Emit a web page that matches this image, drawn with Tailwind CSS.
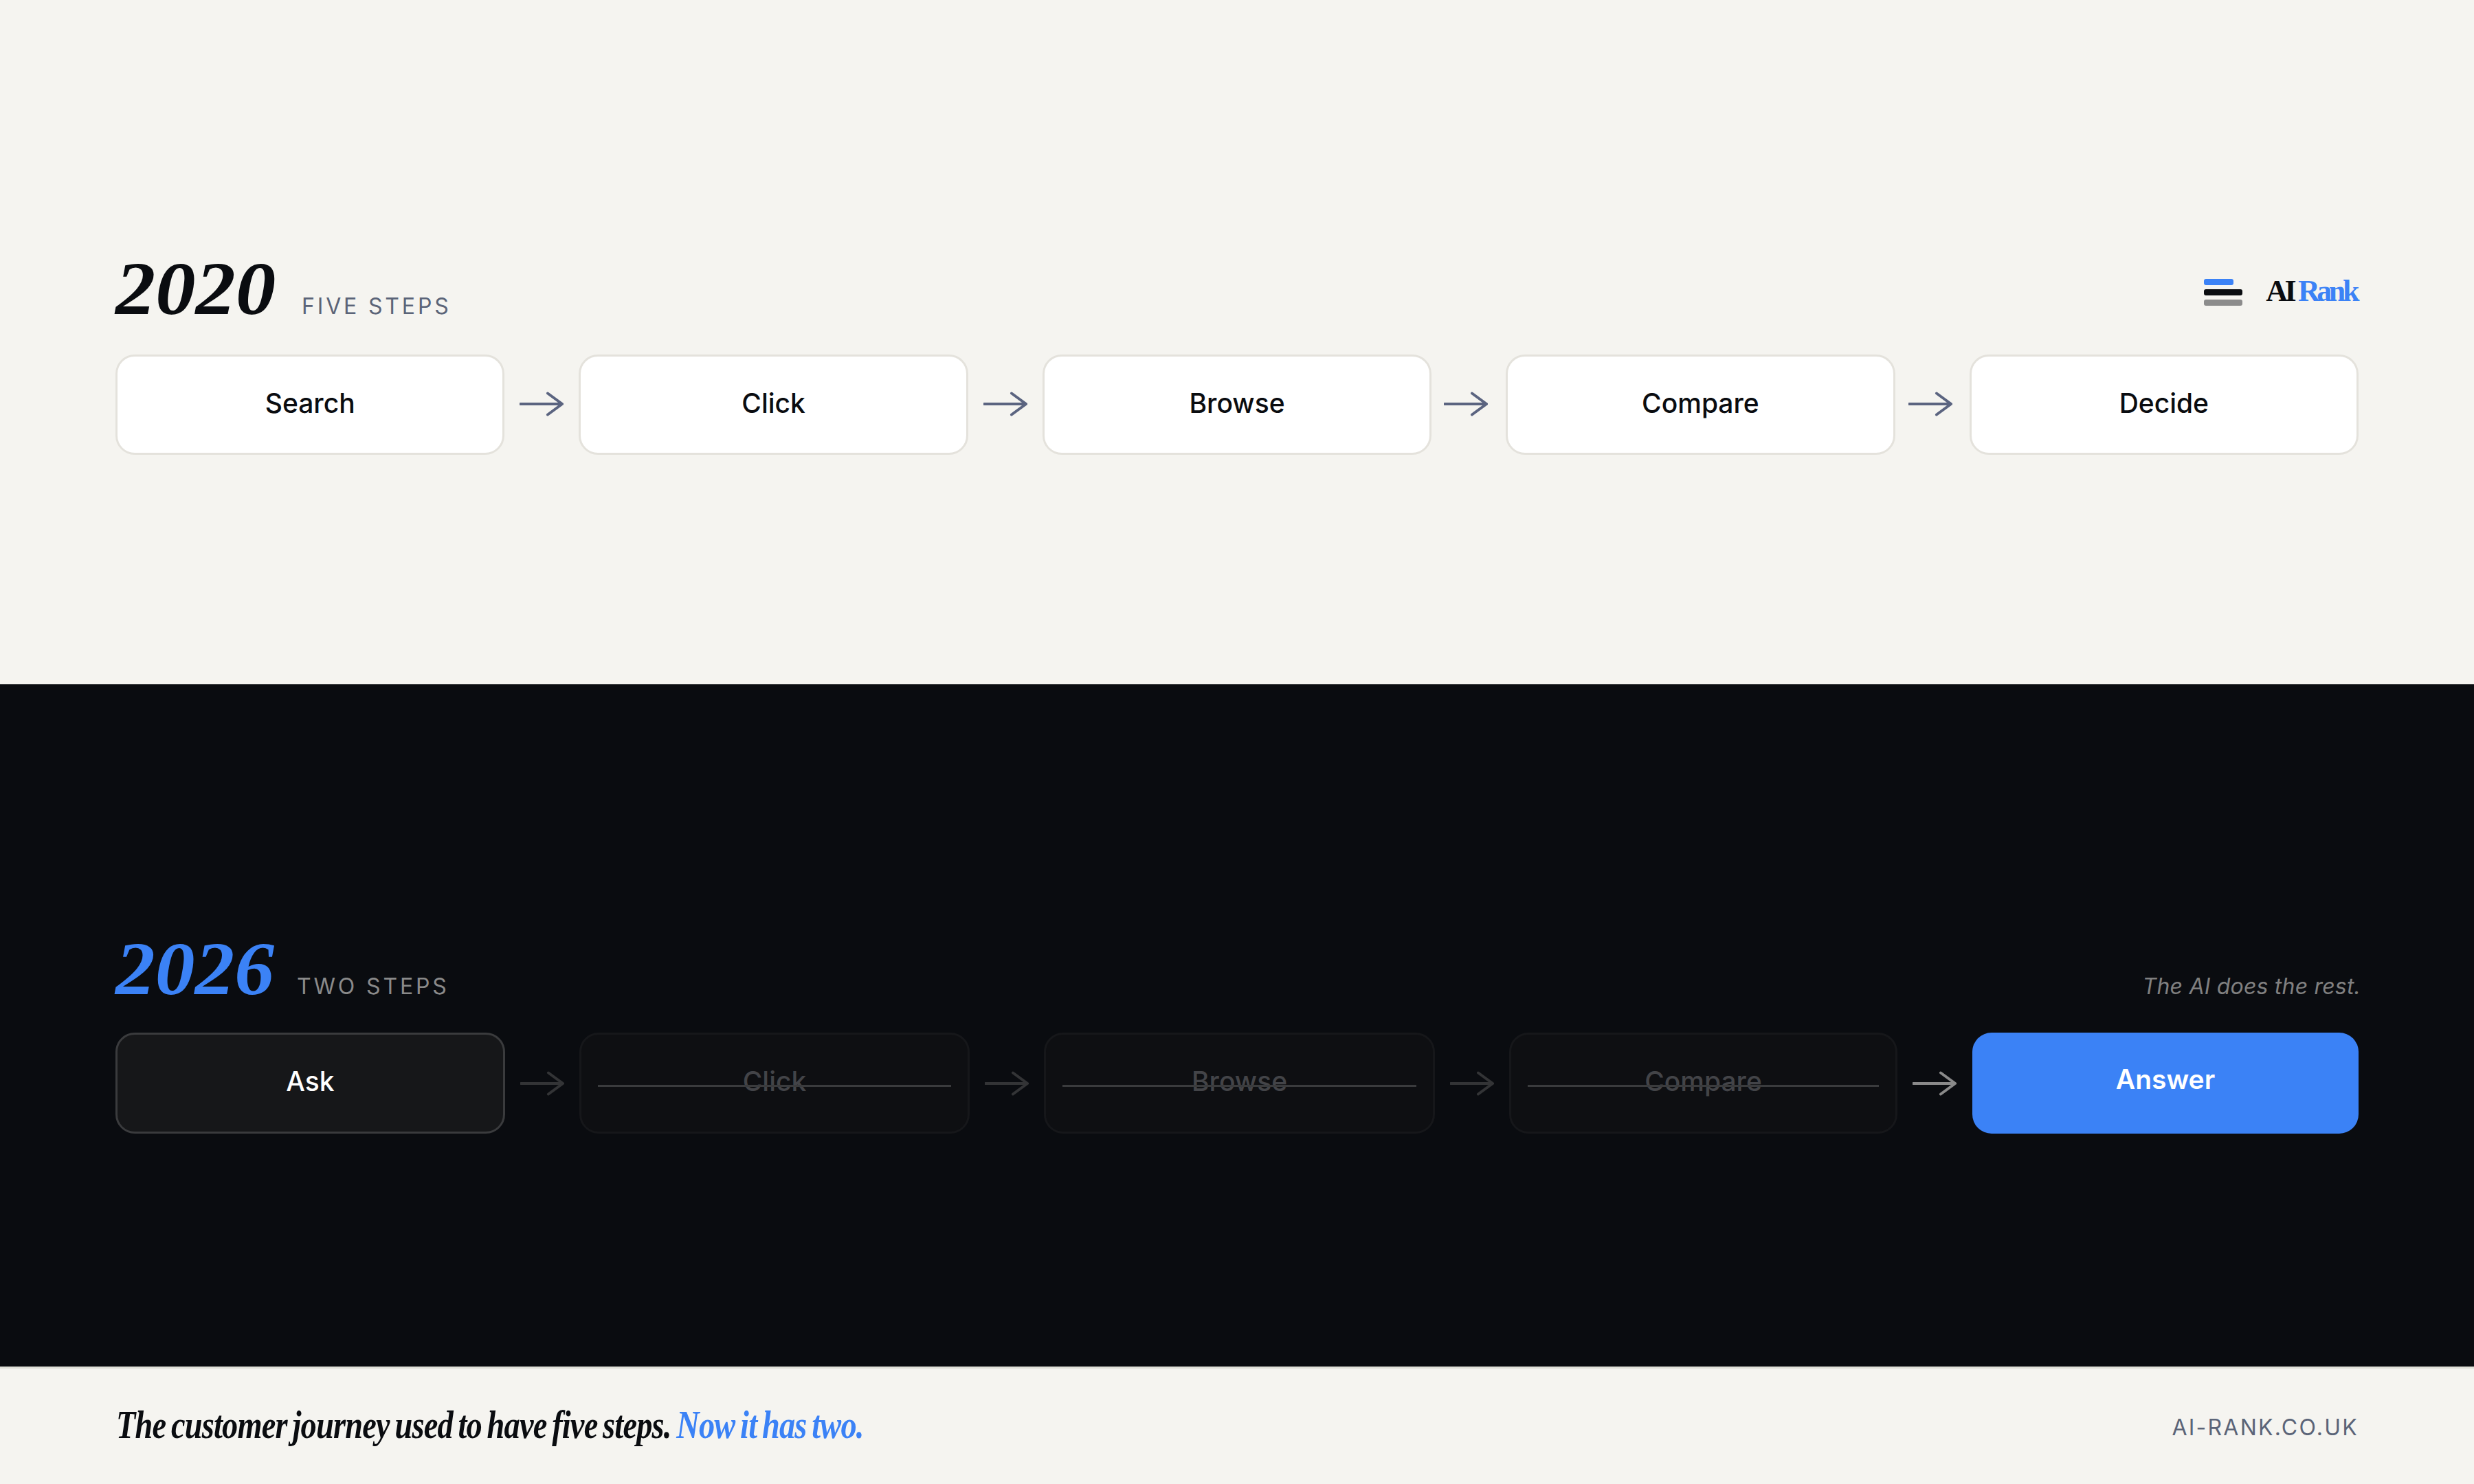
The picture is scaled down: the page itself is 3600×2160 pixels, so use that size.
<!DOCTYPE html>
<html lang="en">
<head>
    <meta charset="UTF-8">
    <title>AI Rank - Customer journey</title>
    <script src="https://cdn.jsdelivr.net/npm/@tailwindcss/browser@4"></script>
</head>
<body class="bg-[#f5f4f0] font-['Inter',sans-serif]">
    <div class="w-[3600px] h-[2160px] flex flex-col overflow-hidden">

        <!-- 2020 -->
        <section class="h-[996px] px-[168px] pt-[365px] bg-[#f5f4f0]">
            <div class="h-[110px] mb-[41px] flex items-baseline justify-between">
                <div class="flex items-baseline">
                    <span class="w-[271px] origin-left scale-x-[1.06] text-[110px] leading-none font-bold italic font-['Liberation_Serif',serif] text-[#0a0c10]">2020</span>
                    <span class="text-[32px] leading-none tracking-[0.12em] text-[#5b6478]">FIVE STEPS</span>
                </div>
                <div class="flex items-center self-center gap-[34px] pt-[7px] mr-[3px]">
                    <div class="flex flex-col gap-[6px] mt-[3px]">
                        <div class="w-[43px] h-[9px] rounded-[3px] bg-[#3b82f6]"></div>
                        <div class="w-[56px] h-[9px] rounded-[3px] bg-[#0a0c10]"></div>
                        <div class="w-[56px] h-[9px] rounded-[3px] bg-[#8c8c8c]"></div>
                    </div>
                    <div class="text-[44px] leading-none font-bold tracking-[-0.1em] font-['Liberation_Serif',serif] text-[#0a0c10]">AI <span class="text-[#3b82f6]">Rank</span></div>
                </div>
            </div>
            <div class="flex items-center gap-[22px]">
                <div class="flex-1 h-[146px] pb-[4px] flex items-center justify-center rounded-[28px] border-[3px] border-[#e4e2dc] bg-white text-[39px] font-medium text-[#0a0c10]">Search</div>
                <svg class="w-[64px] h-[36px] mb-[2px] shrink-0 text-[#5b6480]" viewBox="0 0 64 36" fill="none" stroke="currentColor" stroke-width="4" stroke-linecap="round"><path d="M1 18H62M41 2.5l21 15.5-21 15.5"/></svg>
                <div class="flex-1 h-[146px] pb-[4px] flex items-center justify-center rounded-[28px] border-[3px] border-[#e4e2dc] bg-white text-[39px] font-medium text-[#0a0c10]">Click</div>
                <svg class="w-[64px] h-[36px] mb-[2px] shrink-0 text-[#5b6480]" viewBox="0 0 64 36" fill="none" stroke="currentColor" stroke-width="4" stroke-linecap="round"><path d="M1 18H62M41 2.5l21 15.5-21 15.5"/></svg>
                <div class="flex-1 h-[146px] pb-[4px] flex items-center justify-center rounded-[28px] border-[3px] border-[#e4e2dc] bg-white text-[39px] font-medium text-[#0a0c10]">Browse</div>
                <svg class="w-[64px] h-[36px] mb-[2px] shrink-0 -translate-x-[4px] text-[#5b6480]" viewBox="0 0 64 36" fill="none" stroke="currentColor" stroke-width="4" stroke-linecap="round"><path d="M1 18H62M41 2.5l21 15.5-21 15.5"/></svg>
                <div class="flex-1 h-[146px] pb-[4px] flex items-center justify-center rounded-[28px] border-[3px] border-[#e4e2dc] bg-white text-[39px] font-medium text-[#0a0c10]">Compare</div>
                <svg class="w-[64px] h-[36px] mb-[2px] shrink-0 -translate-x-[3px] text-[#5b6480]" viewBox="0 0 64 36" fill="none" stroke="currentColor" stroke-width="4" stroke-linecap="round"><path d="M1 18H62M41 2.5l21 15.5-21 15.5"/></svg>
                <div class="flex-1 h-[146px] pb-[4px] flex items-center justify-center rounded-[28px] border-[3px] border-[#e4e2dc] bg-white text-[39px] font-medium text-[#0a0c10]">Decide</div>
            </div>
        </section>

        <!-- 2026 -->
        <section class="h-[993px] px-[168px] pt-[359px] bg-[#0a0c10]">
            <div class="h-[110px] mb-[38px] flex items-baseline justify-between">
                <div class="flex items-baseline">
                    <span class="w-[264px] origin-left scale-x-[1.05] text-[110px] leading-none font-bold italic font-['Liberation_Serif',serif] text-[#3b82f6]">2026</span>
                    <span class="text-[32px] leading-none tracking-[0.12em] text-[#8a8a8a]">TWO STEPS</span>
                </div>
                <span class="-mr-[3px] text-[32px] leading-none tracking-[0.2px] italic text-[#808080]">The AI does the rest.</span>
            </div>
            <div class="flex items-center gap-[22px]">
                <div class="w-[567px] h-[147px] pb-[4px] flex items-center justify-center rounded-[28px] border-[3px] border-[#3a3b3d] bg-[#161719] text-[39px] font-medium text-white">Ask</div>
                <svg class="w-[64px] h-[36px] shrink-0 text-[#333436]" viewBox="0 0 64 36" fill="none" stroke="currentColor" stroke-width="4" stroke-linecap="round"><path d="M1 18H62M41 2.5l21 15.5-21 15.5"/></svg>
                <div class="relative w-[568px] h-[147px] pb-[4px] flex items-center justify-center rounded-[28px] border-[3px] border-[#16171a] bg-[#0e0f12] text-[39px] font-medium text-[#434448]">Click
                    <div class="absolute left-[24px] right-[24px] top-[73px] h-[3px] bg-[#3a3b3d]"></div>
                </div>
                <svg class="w-[64px] h-[36px] shrink-0 text-[#333436]" viewBox="0 0 64 36" fill="none" stroke="currentColor" stroke-width="4" stroke-linecap="round"><path d="M1 18H62M41 2.5l21 15.5-21 15.5"/></svg>
                <div class="relative w-[569px] h-[147px] pb-[4px] flex items-center justify-center rounded-[28px] border-[3px] border-[#16171a] bg-[#0e0f12] text-[39px] font-medium text-[#434448]">Browse
                    <div class="absolute left-[24px] right-[24px] top-[73px] h-[3px] bg-[#3a3b3d]"></div>
                </div>
                <svg class="w-[64px] h-[36px] shrink-0 text-[#333436]" viewBox="0 0 64 36" fill="none" stroke="currentColor" stroke-width="4" stroke-linecap="round"><path d="M1 18H62M41 2.5l21 15.5-21 15.5"/></svg>
                <div class="relative w-[565px] h-[147px] pb-[4px] flex items-center justify-center rounded-[28px] border-[3px] border-[#16171a] bg-[#0e0f12] text-[39px] font-medium text-[#434448]">Compare
                    <div class="absolute left-[24px] right-[24px] top-[73px] h-[3px] bg-[#3a3b3d]"></div>
                </div>
                <svg class="w-[64px] h-[36px] shrink-0 text-[#8a8a8a]" viewBox="0 0 64 36" fill="none" stroke="currentColor" stroke-width="4" stroke-linecap="round"><path d="M1 18H62M41 2.5l21 15.5-21 15.5"/></svg>
                <div class="w-[562px] ml-[1px] h-[147px] pb-[10px] flex items-center justify-center rounded-[28px] bg-[#3b82f6] text-[39px] font-semibold text-white">Answer</div>
            </div>
        </section>

        <!-- footer -->
        <footer class="flex-1 px-[168px] flex items-center justify-between border-t-[3px] border-[#e0e0d8] bg-[#f5f4f0]">
            <div class="ml-[1px] pb-[4px] origin-left scale-x-[0.8] text-[58px] leading-none font-bold italic tracking-[-1px] [word-spacing:-4px] font-['Liberation_Serif',serif] text-[#0a0c10]">The customer journey used to have five steps. <span class="text-[#3b82f6]">Now it has two.</span></div>
            <div class="pt-[4px] text-[32px] leading-none tracking-[0.07em] text-[#5b6478]">AI-RANK.CO.UK</div>
        </footer>
    </div>
</body>
</html>
